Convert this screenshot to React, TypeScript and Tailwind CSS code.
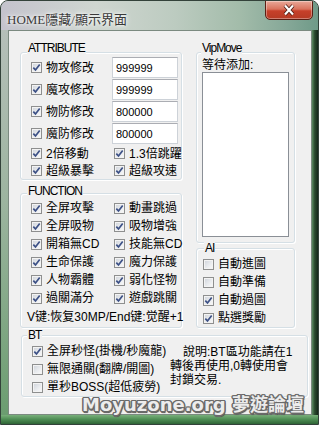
import React from "react";
import clsx from "clsx";

const attrInputs = [
  { label: "物攻修改", value: "999999" },
  { label: "魔攻修改", value: "999999" },
  { label: "物防修改", value: "800000" },
  { label: "魔防修改", value: "800000" },
];

const funcs = [
  ["全屏攻擊", "動畫跳過"],
  ["全屏吸物", "吸物增強"],
  ["開箱無CD", "技能無CD"],
  ["生命保護", "魔力保護"],
  ["人物霸體", "弱化怪物"],
  ["過關滿分", "遊戲跳關"],
];

const ai = [
  { label: "自動進圖", on: false },
  { label: "自動準備", on: false },
  { label: "自動過圖", on: true },
  { label: "點選獎勵", on: true },
];

const bt = [
  { label: "全屏秒怪(掛機/秒魔龍)", on: true },
  { label: "無限通關(翻牌/開圖)", on: false },
  { label: "單秒BOSS(超低疲勞)", on: false },
];

const Box = ({ on = true }: { on?: boolean }) => (
  <span className="flex h-[11px] w-[11px] shrink-0 items-center justify-center border border-[#8e8f8f] bg-[linear-gradient(135deg,#cdd2d9_0%,#e9ebee_55%,#fbfbfb_100%)] shadow-[inset_0_0_0_1px_#f3f3f3]">
    {on && (
      <svg width="9" height="9" viewBox="0 0 9 9">
        <path d="M1.3 4.6 L3.5 6.9 L7.7 1.5" fill="none" stroke="#3d5186" strokeWidth="1.7" />
      </svg>
    )}
  </span>
);

const Opt = ({ label, on = true, className }: { label: string; on?: boolean; className?: string }) => (
  <div className={clsx("flex items-center gap-[4px] whitespace-nowrap", className)}>
    <Box on={on} />
    <span>{label}</span>
  </div>
);

const Group = ({
  title,
  labelPos,
  className,
  children,
}: {
  title: string;
  labelPos: string;
  className?: string;
  children: React.ReactNode;
}) => (
  <div
    className={clsx(
      "relative shrink-0 rounded-[3px] border border-[#d5dfe5] shadow-[inset_1px_1px_0_#ffffff,1px_1px_0_#ffffff]",
      className
    )}
  >
    <span
      className={clsx(
        "absolute bg-[#f0f0f0] px-[1px] font-['Liberation_Sans',sans-serif] text-[12px] leading-[12px] tracking-[-1px] text-black",
        labelPos
      )}
    >
      {title}
    </span>
    {children}
  </div>
);

export default function App() {
  return (
    <div className="h-[425px] w-[319px] bg-white">
      <div className="flex h-[425px] w-[319px] flex-col overflow-hidden rounded-t-[8px] border border-[#33423a] bg-[#9cb6a2]">
        {/* title bar */}
        <div className="relative h-[29px] shrink-0 bg-[linear-gradient(90deg,#c4c3cd_0%,#cfd6d0_30%,#bccbc0_55%,#a3bcaa_75%,#86a898_90%,#6f9a88_100%)] pl-[6px] pt-[5px]">
          <span className="font-['Liberation_Serif','Noto_Sans_CJK_TC',serif] text-[13px] leading-[16px] text-[#3a3a3a] [text-shadow:0_0_6px_#ffffff,0_0_3px_#ffffff]">
            HOME隱藏/顯示界面
          </span>
          <div className="absolute right-[5px] top-[-1px] flex h-[20px] w-[48px] items-center justify-center rounded-b-[5px] border border-[#5b1f14] bg-[linear-gradient(180deg,#e9a999_0%,#d9735d_45%,#c6402a_55%,#b53a24_100%)] shadow-[inset_0_0_0_1px_rgba(255,255,255,0.35)]">
            <svg width="14" height="12" viewBox="0 0 14 12">
              <path d="M3 1.5 L11 10.5 M11 1.5 L3 10.5" stroke="#4a1a10" strokeWidth="3.8" />
              <path d="M3 1.5 L11 10.5 M11 1.5 L3 10.5" stroke="#ffffff" strokeWidth="2.2" />
            </svg>
          </div>
        </div>

        <div className="flex h-[385px] shrink-0">
          <div className="w-[7px] bg-[linear-gradient(180deg,#b5bfb9_0%,#9cb49f_45%,#6b9d70_100%)]" />

          {/* client */}
          <div className="relative h-[385px] w-[304px] border border-[#7b8a80] bg-[#f0f0f0] pt-[21px] font-['Liberation_Sans','Noto_Sans_CJK_TC',sans-serif] text-[12px] leading-[14px] text-black">
            <div className="flex pl-[11px]">
              <div className="flex w-[162px] flex-col">
                <Group title="ATTRIBUTE" labelPos="left-[6px] top-[-11px]" className="h-[128px] w-[162px] pl-[10px] pt-[4px]">
                  <div className="flex flex-col gap-[1px]">
                    {attrInputs.map((r) => (
                      <div key={r.label} className="grid h-[21px] grid-cols-[81px_66px] items-center">
                        <Opt label={r.label} />
                        <div className="h-[21px] border border-[#cdd2d8] border-t-[#abadb3] bg-white pl-[3px] pt-[2px] font-['Liberation_Sans',sans-serif] text-[11px] leading-[17px]">
                          {r.value}
                        </div>
                      </div>
                    ))}
                  </div>
                  <div className="mt-[1px] grid grid-cols-[83px_1fr]">
                    <Opt label="2倍移動" className="h-[17px]" />
                    <Opt label="1.3倍跳躍" className="h-[17px]" />
                    <Opt label="超級暴擊" className="h-[17px]" />
                    <Opt label="超級攻速" className="h-[17px]" />
                  </div>
                </Group>

                <Group title="FUNCTION" labelPos="left-[6px] top-[-9px]" className="mt-[13px] h-[135px] w-[162px] pl-[6px] pt-[5px]">
                  <div className="grid grid-cols-[83px_1fr] pl-[4px]">
                    {funcs.map(([a, b]) => (
                      <React.Fragment key={a}>
                        <Opt label={a} className="h-[18px]" />
                        <Opt label={b} className="h-[18px]" />
                      </React.Fragment>
                    ))}
                  </div>
                  <div className="flex h-[20px] items-center whitespace-nowrap font-['Liberation_Sans','Noto_Sans_CJK_SC',sans-serif]">
                    V键:恢复30MP/End键:觉醒+1
                  </div>
                </Group>
              </div>

              <div className="ml-[14px] flex w-[99px] flex-col">
                <Group title="VipMove" labelPos="left-[4px] top-[-11px]" className="h-[191px] w-[99px] pl-[5px] pt-[5px]">
                  <div className="h-[14px] whitespace-nowrap">等待添加:</div>
                  <div className="h-[165px] w-[87px] border border-[#8a8f96] bg-white" />
                </Group>

                <Group title="AI" labelPos="left-[7px] top-[-7px]" className="mt-[5px] h-[80px] w-[99px] pl-[6px] pt-[6px]">
                  {ai.map((r) => (
                    <Opt key={r.label} label={r.label} on={r.on} className="h-[18px]" />
                  ))}
                </Group>
              </div>
            </div>

            <div className="ml-[12px] mt-[7px]">
              <Group title="BT" labelPos="left-[5px] top-[-7px]" className="flex h-[62px] w-[287px] pl-[10px] pt-[6px]">
                <div className="w-[138px] shrink-0">
                  {bt.map((r) => (
                    <Opt key={r.label} label={r.label} on={r.on} className="h-[18px]" />
                  ))}
                </div>
                <div className="mt-[3px] whitespace-nowrap leading-[14px]">
                  <div className="pl-[13px]">說明:BT區功能請在1</div>
                  <div>轉後再使用,0轉使用會</div>
                  <div>封鎖交易.</div>
                </div>
              </Group>
            </div>

            <div className="absolute left-[73px] top-[364px] whitespace-nowrap font-['DejaVu_Sans','Noto_Sans_CJK_TC',sans-serif] text-[18px] font-bold leading-[20px] text-[#ececec] [text-shadow:1.5px_0_0_#6a6a6a,-1.5px_0_0_#6a6a6a,0_1.5px_0_#6a6a6a,0_-1.5px_0_#6a6a6a,1px_1px_0_#6a6a6a,-1px_-1px_0_#6a6a6a,1px_-1px_0_#6a6a6a,-1px_1px_0_#6a6a6a,1px_2px_1px_#444]">
              Moyuzone.org 夢遊論壇
            </div>
          </div>

          <div className="w-[6px] bg-[linear-gradient(90deg,#5c8a62_0%,#2a4a2e_45%,#15261a_100%)]" />
        </div>

        <div className="h-[9px] shrink-0 bg-[linear-gradient(180deg,#79b07b_0%,#4d8c53_50%,#2f6436_100%)]" />
      </div>
    </div>
  );
}
